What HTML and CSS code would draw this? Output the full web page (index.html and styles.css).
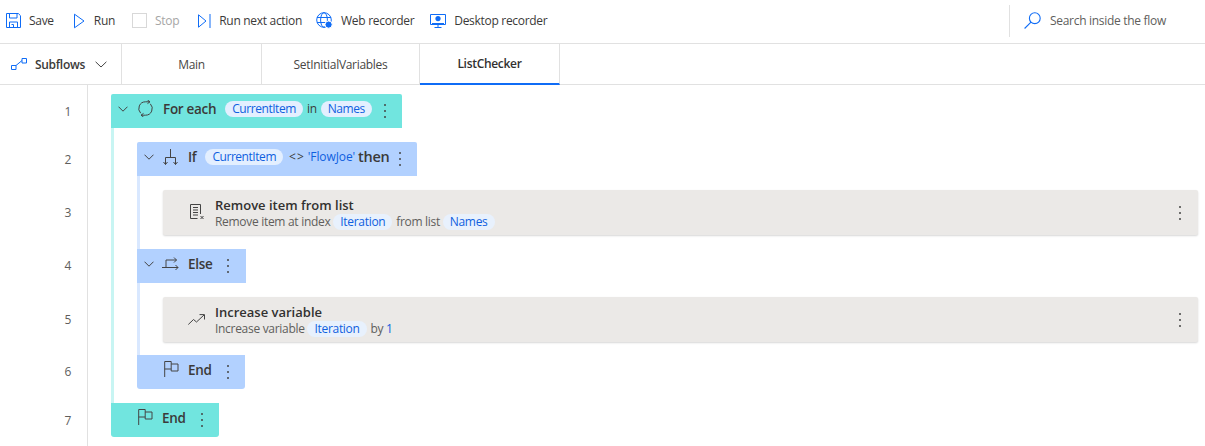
FILE: index.html
```html
<!DOCTYPE html>
<html lang="en">
<head>
<meta charset="utf-8">
<title>ListChecker</title>
<link rel="stylesheet" href="styles.css">
</head>
<body>
<header class="toolbar">
  <div class="tool tool-save"><svg width="15" height="15" viewBox="0 0 15 15"><path d="M.5.500h11.800l2.200 2.200v11.800H.5zM3.500.5v4.500h7.500V.5M3.500 14.500V9h8v5.500M5.500 11.500h2v3" fill="none" stroke="#0f6cf6"/></svg><span>Save</span></div>
  <div class="tool tool-run"><svg width="11" height="16" viewBox="0 0 11 16"><path d="M.5 1.200v13.600L10 8z" fill="none" stroke="#0f6cf6"/></svg><span>Run</span></div>
  <div class="tool tool-stop disabled"><span class="stopbox"></span><span>Stop</span></div>
  <div class="tool tool-next"><svg width="13" height="16" viewBox="0 0 13 16"><path d="M.5 1.800v12.400L8 8zM12 1v14" fill="none" stroke="#0f6cf6"/></svg><span>Run next action</span></div>
  <div class="tool tool-web"><svg width="17" height="17" viewBox="0 0 17 17"><g fill="none" stroke="#0f6cf6"><circle cx="8" cy="8" r="7.300"/><ellipse cx="8" cy="8" rx="3.400" ry="7.300"/><path d="M1 5.500h14M1 10.500h14"/></g><circle cx="12.600" cy="12.600" r="3.600" fill="#0f6cf6" stroke="#fff"/></svg><span>Web recorder</span></div>
  <div class="tool tool-desk"><svg width="16" height="16" viewBox="0 0 16 16"><path d="M.5 1.500h15v10H.5zM8 11.500v3M4.500 14.500h7" fill="none" stroke="#0f6cf6"/><path d="M2 10h12v1H2z" fill="#0f6cf6"/><circle cx="8" cy="5.600" r="2.600" fill="#0f6cf6"/></svg><span>Desktop recorder</span></div>
  <div class="search"><svg width="17" height="17" viewBox="0 0 17 17"><g fill="none" stroke="#0f6cf6" stroke-width="1.100"><circle cx="10.800" cy="6.200" r="5.400"/><path d="M7 10.200L.6 16.500"/></g></svg><span>Search inside the flow</span></div>
</header>
<nav class="tabs">
  <div class="subflows"><svg width="16" height="12" viewBox="0 0 16 12"><path d="M.5 7.500h4.500v4H.5zM11 .5h4.500v4.500H11zM5 7.500L11 2.500" fill="none" stroke="#0f6cf6"/></svg><b>Subflows</b><svg width="12" height="7" viewBox="0 0 12 7"><path d="M.6.800L6 6l5.400-5.200" fill="none" stroke="#444"/></svg></div>
  <div class="tab tab-main">Main</div>
  <div class="tab tab-vars">SetInitialVariables</div>
  <div class="tab active">ListChecker</div>
</nav>
<main class="editor">
  <ol class="gutter">
    <li>1</li><li>2</li><li class="tall">3</li><li class="up">4</li><li class="tall second">5</li><li class="up">6</li><li>7</li>
  </ol>
  <div class="flow">
    <section class="block loop">
      <div class="head head-loop">
        <svg class="chev" width="10" height="6" viewBox="0 0 10 6"><path d="M.5.700L5 5.200 9.500.7" fill="none" stroke="#444"/></svg>
        <svg class="hicon" width="17" height="17" viewBox="0 0 17 17"><path d="M13 1.800H8.500A6.700 6.700 0 0 0 3.700 13.200M4 15.200H8.500A6.700 6.700 0 0 0 13.300 3.800M10.500 0L13 1.800 10.500 3.600M6.500 13.400L4 15.200 6.500 17" fill="none" stroke="#444"/></svg>
        <strong>For each</strong><span class="pill">CurrentItem</span><span class="kw">in</span><span class="pill">Names</span>
        <svg class="dots" width="14" height="16" viewBox="0 0 14 16"><circle cx="7" cy="2" r="1" fill="#444"/><circle cx="7" cy="8" r="1" fill="#444"/><circle cx="7" cy="14" r="1" fill="#444"/></svg>
      </div>
      <div class="body body-loop">
        <section class="block cond">
          <div class="head head-if">
            <svg class="chev" width="10" height="6" viewBox="0 0 10 6"><path d="M.5.700L5 5.200 9.500.7" fill="none" stroke="#444"/></svg>
            <svg class="hicon if-icon" width="15" height="16" viewBox="0 0 15 16"><path d="M7.500 0v8.500M2.500 8.500h10M2.500 8.500v7M12.500 8.500v7M.5 13l2 2.500 2-2.500M10.500 13l2 2.500 2-2.500" fill="none" stroke="#444"/></svg>
            <strong>If</strong><span class="pill">CurrentItem</span><span class="op">&lt;&gt;</span><span class="str">'FlowJoe'</span><span class="then">then</span>
            <svg class="dots" width="14" height="16" viewBox="0 0 14 16"><circle cx="7" cy="2" r="1" fill="#444"/><circle cx="7" cy="8" r="1" fill="#444"/><circle cx="7" cy="14" r="1" fill="#444"/></svg>
          </div>
          <div class="body body-if">
            <article class="card">
              <svg class="cicon" width="15" height="16" viewBox="0 0 15 16"><path d="M10.500 10V.5H.5v14h7M3 3.500h5M3 6h5M3 8.500h5M3 11h5M10.500 12l3 3M13.500 12l-3 3" fill="none" stroke="#444"/></svg>
              <div class="ctext">
                <h3>Remove item from list</h3>
                <p>Remove item at index <span class="pill small">Iteration</span> from list <span class="pill small">Names</span></p>
              </div>
              <svg class="dots card-dots" width="14" height="16" viewBox="0 0 14 16"><circle cx="7" cy="2" r="1" fill="#444"/><circle cx="7" cy="8" r="1" fill="#444"/><circle cx="7" cy="14" r="1" fill="#444"/></svg>
            </article>
            <div class="head head-if head-else">
              <svg class="chev" width="10" height="6" viewBox="0 0 10 6"><path d="M.5.700L5 5.200 9.500.7" fill="none" stroke="#444"/></svg>
              <svg class="hicon else-icon" width="17" height="13" viewBox="0 0 17 13"><path d="M0 10.500h16M13.500 8l2.500 2.500L13.500 13M4 10.500V3h10.500M12 .5L14.500 3 12 5.500" fill="none" stroke="#444"/></svg>
              <strong>Else</strong>
              <svg class="dots wide" width="14" height="16" viewBox="0 0 14 16"><circle cx="7" cy="2" r="1" fill="#444"/><circle cx="7" cy="8" r="1" fill="#444"/><circle cx="7" cy="14" r="1" fill="#444"/></svg>
            </div>
            <article class="card">
              <svg class="cicon inc-icon" width="17" height="11" viewBox="0 0 17 11"><path d="M.3 10.500L5.500 5.500 8.500 8l7.500-7M11.500.6H16.500V5.500" fill="none" stroke="#444"/></svg>
              <div class="ctext">
                <h3>Increase variable</h3>
                <p>Increase variable <span class="pill small">Iteration</span> by <span class="num">1</span></p>
              </div>
              <svg class="dots card-dots" width="14" height="16" viewBox="0 0 14 16"><circle cx="7" cy="2" r="1" fill="#444"/><circle cx="7" cy="8" r="1" fill="#444"/><circle cx="7" cy="14" r="1" fill="#444"/></svg>
            </article>
          </div>
          <div class="head head-if head-end">
            <svg class="flag" width="15" height="16" viewBox="0 0 15 16"><path d="M.7 16V.5h6.500v2.500h6.800v7H7.200V8H.7M7.200 3v5" fill="none" stroke="#444"/></svg>
            <strong>End</strong>
            <svg class="dots wide" width="14" height="16" viewBox="0 0 14 16"><circle cx="7" cy="2" r="1" fill="#444"/><circle cx="7" cy="8" r="1" fill="#444"/><circle cx="7" cy="14" r="1" fill="#444"/></svg>
          </div>
        </section>
      </div>
      <div class="head head-loop head-end">
        <svg class="flag" width="15" height="16" viewBox="0 0 15 16"><path d="M.7 16V.5h6.500v2.500h6.800v7H7.200V8H.7M7.200 3v5" fill="none" stroke="#444"/></svg>
        <strong>End</strong>
        <svg class="dots wide" width="14" height="16" viewBox="0 0 14 16"><circle cx="7" cy="2" r="1" fill="#444"/><circle cx="7" cy="8" r="1" fill="#444"/><circle cx="7" cy="14" r="1" fill="#444"/></svg>
      </div>
    </section>
  </div>
</main>
</body>
</html>
```
FILE: styles.css
```css
* { box-sizing: border-box; }
html, body { margin: 0; height: 100%; overflow: hidden; }
body { font-family: "Open Sans", "Noto Sans", sans-serif; font-size: 12px; letter-spacing: -.3px; color: #3b3a39; background: #fff; }
svg { display: block; flex: none; }

.toolbar { height: 44px; border-bottom: 1px solid #e1e1e1; display: flex; align-items: center; padding: 0 0 2px 6px; }
.tool { display: flex; align-items: center; gap: 8px; white-space: nowrap; }
.tool-run { margin-left: 20px; gap: 9px; }
.tool-stop { margin-left: 17px; gap: 8px; }
.tool-next { margin-left: 19px; gap: 8px; }
.tool-web { margin-left: 14px; gap: 8px; }
.tool-desk { margin-left: 16px; gap: 8px; }
.disabled { color: #a6a6a6; }
.stopbox { width: 15px; height: 15px; border: 1px solid #d8d8d8; }
.search { margin-left: auto; width: 196px; height: 32px; border-left: 1px solid #e1e1e1; display: flex; align-items: center; gap: 9px; padding-left: 14px; color: #605e5c; white-space: nowrap; }

.tabs { height: 41px; border-bottom: 1px solid #e1e1e1; display: flex; }
.subflows { width: 122px; border-right: 1px solid #e1e1e1; display: flex; align-items: center; padding-left: 11px; }
.subflows b { font-weight: 600; margin: 0 10px 0 8px; }
.tab { display: flex; align-items: center; justify-content: center; border-right: 1px solid #e1e1e1; white-space: nowrap; color: #484644; }
.tab-main { width: 140px; }
.tab-vars { width: 158px; }
.active { width: 140px; font-weight: 600; color: #323130; border-bottom: 2px solid #0f6cf6; margin-bottom: -1px; }

.editor { display: flex; height: 361px; }
.gutter { width: 88px; height: 100%; margin: 0; padding: 9px 0 0; list-style: none; border-right: 1px solid #e1e1e1; color: #605e5c; }
.gutter li { display: flex; align-items: center; justify-content: flex-end; padding-right: 16px; height: 34px; margin-bottom: 14px; }
.gutter .tall { height: 45px; }
.gutter .second { height: 44px; }
.gutter .up { padding-bottom: 2px; }

.flow { flex: 1; padding: 9px 7px 0 23px; min-width: 0; }
.head { display: flex; align-items: center; height: 34px; width: max-content; padding-bottom: 5px; padding-right: 10px; padding-left: 7px; }
.head-loop { background: #71e5df; border-radius: 2px 2px 0 0; }
.head-if { background: #b2d1ff; border-radius: 2px 2px 0 0; }
.chev { margin-right: 9px; }
.hicon { margin-right: 9px; }
.if-icon { margin-right: 10px; }
.else-icon { margin-left: -1px; }
.flag { margin: -1px 9px 0 20px; }
.head strong { font-size: 13.500px; font-weight: 600; }
.head .pill { margin-left: 9px; padding: 0 7px; letter-spacing: -.45px; }
.pill { display: inline-block; background: #e3efff; color: #0f5fe0; border-radius: 9px; line-height: 16px; }
.kw { margin-left: 4px; }
.head .kw + .pill { margin-left: 4px; }
.op { margin-left: 6px; letter-spacing: 1px; }
.str { color: #0f5fe0; margin-left: 3px; letter-spacing: -.1px; }
.then { font-size: 14.500px; font-weight: 600; margin-left: 3px; }
.dots { margin: 5px 0 0 6px; }
.then + .dots { margin-left: 4px; }
.wide { margin-left: 9px; }

.body { padding: 14px 0 14px 23px; }
.body-loop { border-left: 3px solid #c8f5f3; }
.body-if { border-left: 3px solid #d9e8ff; padding-bottom: 13px; }
.head-end { border-radius: 0 0 3px 3px; }
.head-else { border-radius: 0; margin: 14px 0 14px -26px; padding-right: 11px; }

.card { height: 45px; background: #ebe9e7; border-radius: 2px; box-shadow: 0 1px 2px rgba(0,0,0,.16); display: flex; align-items: center; padding-left: 27px; }
.cicon { margin: -2px 10px 0 0; }
.inc-icon { margin: 0 10px 0 -2px; }
.ctext { flex: 1; min-width: 0; margin-top: 1px; }
.ctext h3 { margin: 0; font-size: 13px; font-weight: 600; line-height: 16px; letter-spacing: 0; color: #323130; }
.ctext p { margin: 1px 0 0; line-height: 16px; color: #605e5c; }
.small { padding: 0 7px; margin: 0 1px 0 0; background: #e8f1fd; }
.num { color: #0f5fe0; }
.card-dots { margin: 0 11px 0 0; }
```
